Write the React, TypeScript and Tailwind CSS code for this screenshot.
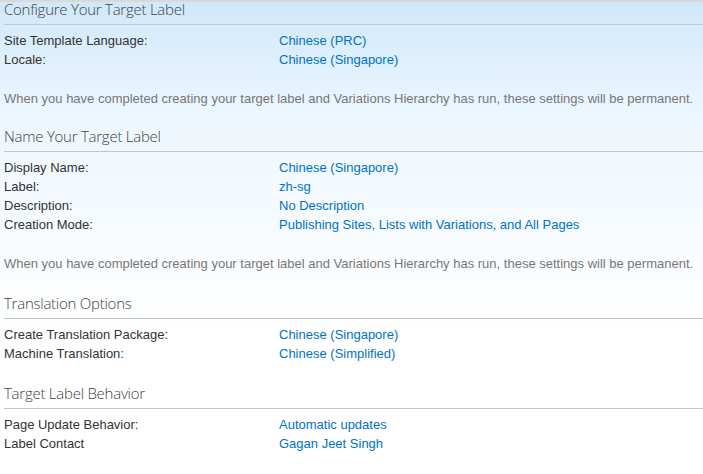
const sections = [
  {
    title: "Configure Your Target Label",
    mt: "mt-0",
    rows: [
      ["Site Template Language:", "Chinese (PRC)"],
      ["Locale:", "Chinese (Singapore)"],
    ],
    note: true,
  },
  {
    title: "Name Your Target Label",
    mt: "mt-[19px]",
    rows: [
      ["Display Name:", "Chinese (Singapore)"],
      ["Label:", "zh-sg"],
      ["Description:", "No Description"],
      ["Creation Mode:", "Publishing Sites, Lists with Variations, and All Pages"],
    ],
    note: true,
  },
  {
    title: "Translation Options",
    mt: "mt-[21px]",
    rows: [
      ["Create Translation Package:", "Chinese (Singapore)"],
      ["Machine Translation:", "Chinese (Simplified)"],
    ],
    note: false,
  },
  {
    title: "Target Label Behavior",
    mt: "mt-[21px]",
    rows: [
      ["Page Update Behavior:", "Automatic updates"],
      ["Label Contact", "Gagan Jeet Singh"],
    ],
    note: false,
  },
];

export default function App() {
  return (
    <div className="w-[703px] h-[474px] overflow-hidden bg-linear-to-b from-[#cfe8fb] via-[#eef7fe] via-25% to-white to-70% shadow-[inset_0_2px_0_#d9d9d9] font-['Liberation_Sans',Arial,sans-serif]">
      {sections.map((s, i) => (
        <section key={i} className={s.mt}>
          <h2 className="ml-[4px] pb-[6px] border-b border-[#c6c6c6] text-[15px] leading-[18px] tracking-[-0.25px] font-light text-[#444] font-['Open_Sans',sans-serif]">
            {s.title}
          </h2>
          <div className="pt-[6px] px-[4px] grid grid-cols-[275px_1fr] text-[13px] leading-[19px]">
            {s.rows.map(([label, value], j) => (
              <div key={j} className="contents">
                <span className="text-[#333]">{label}</span>
                <span className="text-[#0072c6]">{value}</span>
              </div>
            ))}
          </div>
          {s.note && (
            <p className="mt-[20px] px-[4px] text-[13px] leading-[19px] text-[#777]">
              When you have completed creating your target label and Variations Hierarchy has run, these settings will be permanent.
            </p>
          )}
        </section>
      ))}
    </div>
  );
}
